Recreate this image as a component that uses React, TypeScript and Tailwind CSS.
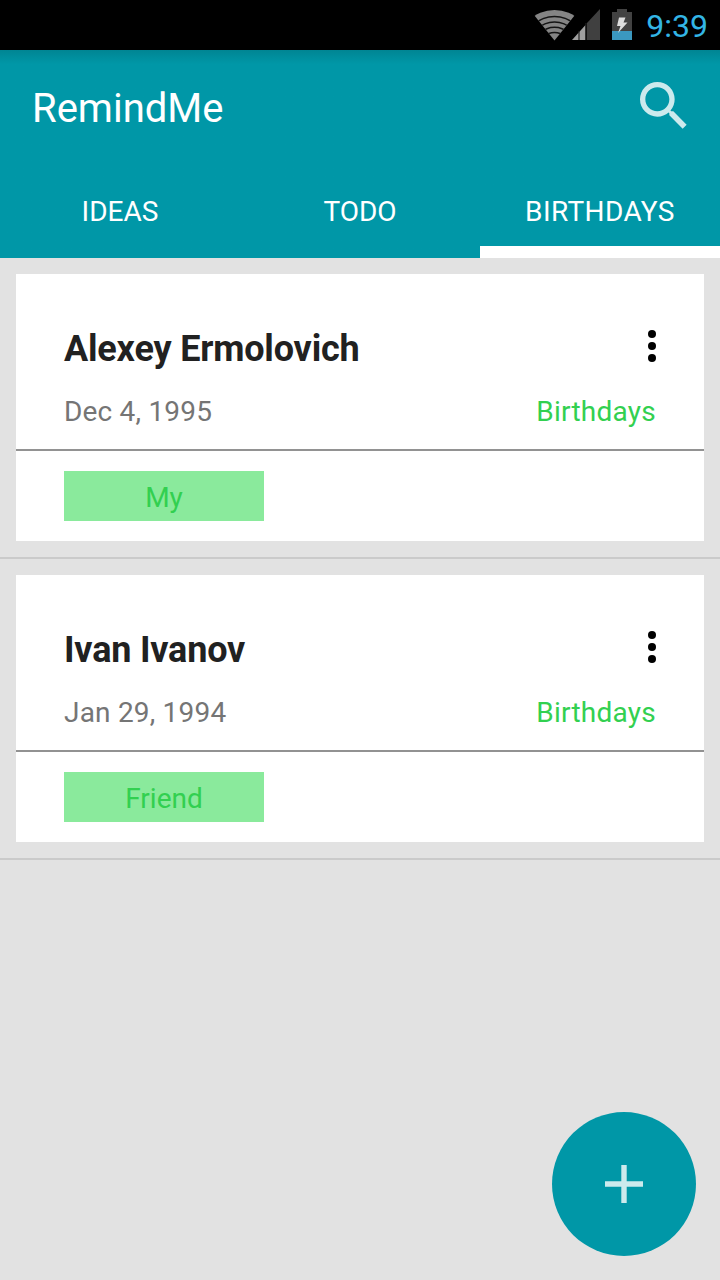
import React from "react";

function StatusBar() {
  return (
    <div className="flex h-[50px] items-center justify-end bg-black pr-3">
      <svg className="h-[50px] w-[102px] shrink-0" viewBox="532 0 102 50">
        <clipPath id="wifi-fan">
          <path d="M554.500 40.500L534 15V5H575V15Z" />
        </clipPath>
        <g clipPath="url(#wifi-fan)">
          <circle cx="554.500" cy="47" r="37" fill="#858585" />
          <g fill="none" stroke="#151515" strokeWidth="1.5">
            <circle cx="554.500" cy="47" r="30.600" />
            <circle cx="554.500" cy="47" r="25" />
            <circle cx="554.500" cy="47" r="19.700" />
            <circle cx="554.500" cy="47" r="14.500" />
          </g>
        </g>
        <path d="M587 23L600 9V40H587Z" fill="#404040" />
        <path d="M572 40L585.500 25V40Z" fill="#a0a0a0" />
        <path d="M579 31V40M586 23V40" stroke="#222" strokeWidth="1.2" />
        <path d="M612 12H617V9H627V12H632V40H612Z" fill="#424242" />
        <path d="M612 31H632V40H612Z" fill="#3b98c0" />
        <path d="M619 17.500H625.500L623.500 22.500H627.500L618 33L620.500 26H617Z" fill="#ddd" />
      </svg>
      <span className="ml-3 pt-px text-[32px] leading-none text-[#33b5e5]">9:39</span>
    </div>
  );
}

type CardProps = { name: string; date: string; tag: string };

function Card({ name, date, tag }: CardProps) {
  return (
    <div className="border-b-2 border-[#cacaca] p-4">
      <div className="h-[267px] bg-white">
        <div className="flex h-[177px] flex-col border-b-2 border-[#929292] px-12 pt-[48px]">
          <div className="flex h-[48px] items-center justify-between">
            <span className="pt-1.5 text-[36px] font-bold tracking-[-0.18px] text-[#212121]">{name}</span>
            <svg className="h-[32px] w-[8px]" viewBox="0 0 8 32">
              <circle cx="4" cy="4" r="4" />
              <circle cx="4" cy="16" r="4" />
              <circle cx="4" cy="28" r="4" />
            </svg>
          </div>
          <div className="mt-[23px] flex h-[38px] items-center justify-between text-[28px]">
            <span className="tracking-[0.2px] text-[#757575]">{date}</span>
            <span className="tracking-[0.25px] text-[#32d050]">Birthdays</span>
          </div>
        </div>
        <div className="mt-[20px] ml-12 flex h-[50px] w-[200px] items-center justify-center bg-[#8aea9c] pt-[3px] text-[28px] text-[#32d050]">
          {tag}
        </div>
      </div>
    </div>
  );
}

export default function App() {
  return (
    <div className="relative flex h-[1280px] w-[720px] flex-col bg-[#e2e2e2] font-[Roboto,sans-serif]">
      <StatusBar />
      <header className="h-[208px] bg-[#0097a7] bg-linear-to-b from-[#008593] to-[#0097a7] to-[14px] text-white">
        <div className="flex h-[112px] items-center justify-between pr-6 pl-8">
          <h1 className="pt-1.5 text-[40px]">RemindMe</h1>
          <svg className="size-16" viewBox="0 0 24 24" fill="#cceaed">
            <path d="M15.500 14h-.79l-.28-.27A6.470 6.470 0 0 0 16 9.500 6.500 6.500 0 1 0 9.500 16c1.610 0 3.090-.59 4.230-1.570l.27.28v.79l5 4.990L20.490 19l-4.990-5zm-6 0C7.010 14 5 11.990 5 9.500S7.010 5 9.500 5 14 7.010 14 9.500 11.990 14 9.500 14z" />
          </svg>
        </div>
        <nav className="grid h-24 grid-cols-3 text-center text-[28px]">
          <span className="pt-[29px]">IDEAS</span>
          <span className="pt-[29px]">TODO</span>
          <span className="border-b-12 border-white pt-[29px] tracking-[0.4px]">BIRTHDAYS</span>
        </nav>
      </header>
      <Card name="Alexey Ermolovich" date="Dec 4, 1995" tag="My" />
      <Card name="Ivan Ivanov" date="Jan 29, 1994" tag="Friend" />
      <button className="absolute right-6 bottom-6 flex size-36 items-center justify-center rounded-full bg-[#0097a7]">
        <svg className="size-[38px]" viewBox="0 0 38 38">
          <path d="M0 19H38M19 0V38" stroke="#cceaed" strokeWidth="5.400" />
        </svg>
      </button>
    </div>
  );
}
